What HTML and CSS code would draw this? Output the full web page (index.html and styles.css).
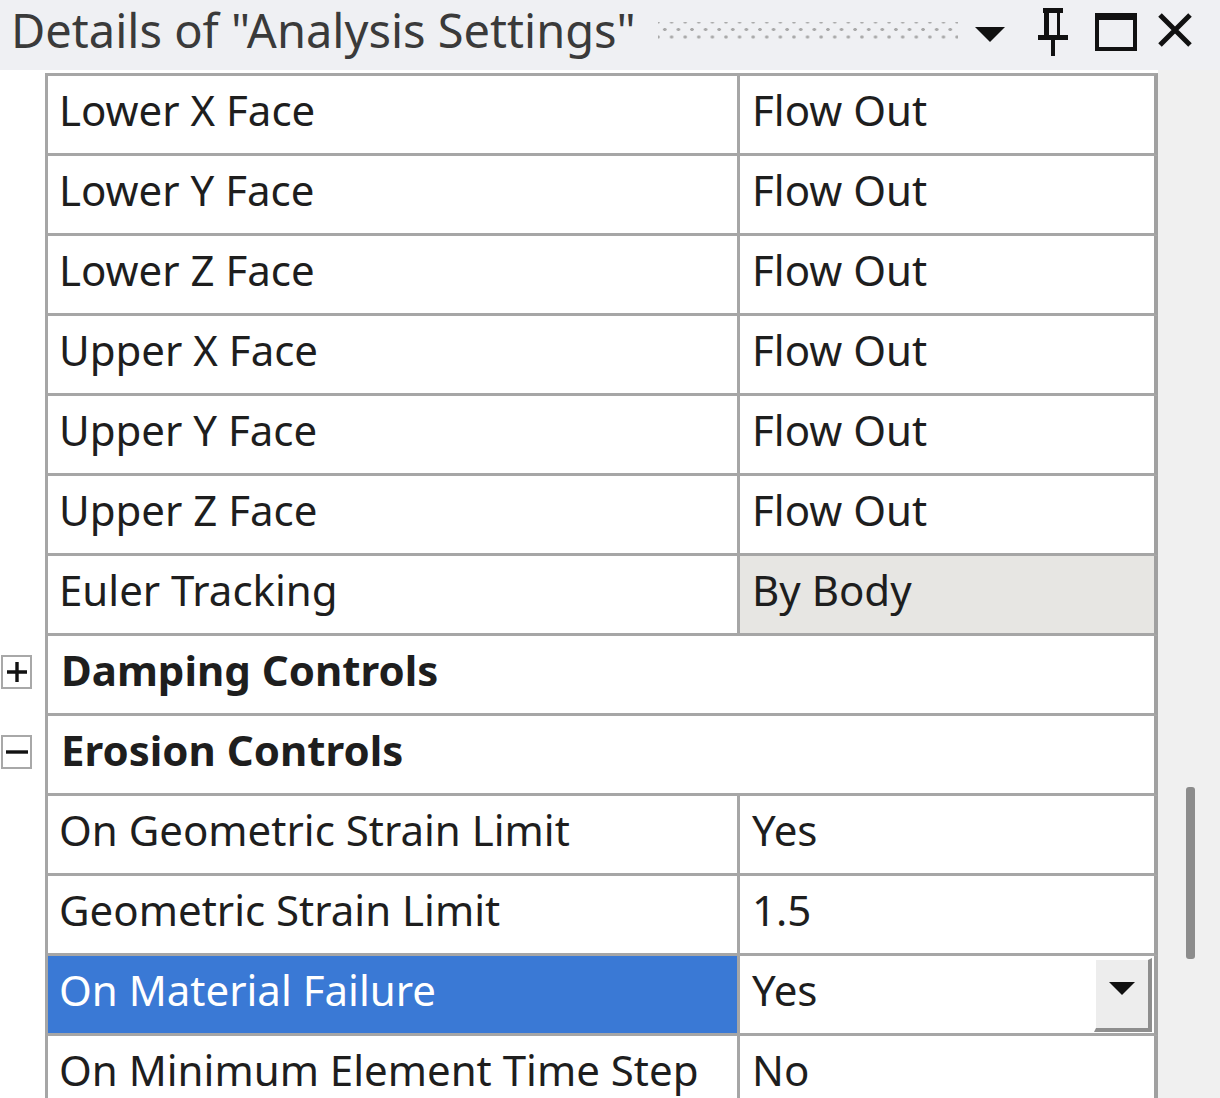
FILE: index.html
```html
<!DOCTYPE html>
<html>
<head>
    <meta charset="UTF-8">
    <title>Details of "Analysis Settings"</title>
    <link rel="stylesheet" href="styles.css">
</head>
<body>
    <div class="titlebar">
        <span class="title">Details of "Analysis Settings"</span>
        <span class="grip"></span>
        <span class="tools">
            <!-- window menu -->
            <svg class="tool menu" width="30" height="16" viewBox="0 0 30 16">
                <polygon points="0,1 30,1 15,16" fill="#111"/>
            </svg>
            <!-- pin -->
            <svg class="tool pin" width="30" height="48" viewBox="0 0 30 48">
                <rect x="5" y="0" width="20" height="5" fill="#111"/>
                <rect x="6" y="3" width="5" height="26" fill="#111"/>
                <rect x="19" y="3" width="3" height="26" fill="#111"/>
                <rect x="0" y="27" width="30" height="5" fill="#111"/>
                <rect x="13" y="31" width="4" height="17" fill="#111"/>
            </svg>
            <!-- maximize -->
            <svg class="tool max" width="42" height="38" viewBox="0 0 42 38">
                <rect x="2" y="2" width="38" height="34" fill="none" stroke="#111" stroke-width="4"/>
                <rect x="0" y="0" width="42" height="7" fill="#111"/>
            </svg>
            <!-- close -->
            <svg class="tool close" width="34" height="34" viewBox="0 0 34 34">
                <path d="M2 2 L32 32 M32 2 L2 32" stroke="#111" stroke-width="5"/>
            </svg>
        </span>
    </div>

    <div class="panel">
        <div class="sheet">
            <div class="row">
                <div class="gutter"></div>
                <div class="cell name">Lower X Face</div>
                <div class="cell value">Flow Out</div>
            </div>
            <div class="row">
                <div class="gutter"></div>
                <div class="cell name">Lower Y Face</div>
                <div class="cell value">Flow Out</div>
            </div>
            <div class="row">
                <div class="gutter"></div>
                <div class="cell name">Lower Z Face</div>
                <div class="cell value">Flow Out</div>
            </div>
            <div class="row">
                <div class="gutter"></div>
                <div class="cell name">Upper X Face</div>
                <div class="cell value">Flow Out</div>
            </div>
            <div class="row">
                <div class="gutter"></div>
                <div class="cell name">Upper Y Face</div>
                <div class="cell value">Flow Out</div>
            </div>
            <div class="row">
                <div class="gutter"></div>
                <div class="cell name">Upper Z Face</div>
                <div class="cell value">Flow Out</div>
            </div>
            <div class="row">
                <div class="gutter"></div>
                <div class="cell name">Euler Tracking</div>
                <div class="cell value readonly">By Body</div>
            </div>
            <div class="row">
                <div class="gutter">
                    <span class="expander">
                        <svg width="22" height="22" viewBox="0 0 22 22">
                            <path d="M1 11 H21 M11 1 V21" stroke="#111" stroke-width="3.4"/>
                        </svg>
                    </span>
                </div>
                <div class="cell group">Damping Controls</div>
            </div>
            <div class="row">
                <div class="gutter">
                    <span class="expander">
                        <svg width="22" height="22" viewBox="0 0 22 22">
                            <path d="M0 11 H22" stroke="#111" stroke-width="3.4"/>
                        </svg>
                    </span>
                </div>
                <div class="cell group">Erosion Controls</div>
            </div>
            <div class="row">
                <div class="gutter"></div>
                <div class="cell name">On Geometric Strain Limit</div>
                <div class="cell value">Yes</div>
            </div>
            <div class="row">
                <div class="gutter"></div>
                <div class="cell name">Geometric Strain Limit</div>
                <div class="cell value">1.5</div>
            </div>
            <div class="row">
                <div class="gutter"></div>
                <div class="cell name selected">On Material Failure</div>
                <div class="cell value combo">
                    <span>Yes</span>
                    <span class="combo-btn">
                        <svg width="28" height="16" viewBox="0 0 28 16">
                            <polygon points="1,2 27,2 14,15" fill="#111"/>
                        </svg>
                    </span>
                </div>
            </div>
            <div class="row">
                <div class="gutter"></div>
                <div class="cell name">On Minimum Element Time Step</div>
                <div class="cell value">No</div>
            </div>
        </div>
        <div class="rail">
            <div class="thumb"></div>
        </div>
    </div>
</body>
</html>
```

FILE: styles.css
```css
body {
    margin: 0;
    background: #ffffff;
    font-family: "Noto Sans", "Open Sans", sans-serif;
    color: #1e1e1e;
    overflow: hidden;
}

/* header strip */
.titlebar {
    height: 70px;
    background: #eff0f3;
    display: flex;
    align-items: center;
    padding-left: 11px;
}

.title {
    font-size: 47px;
    color: #3a3a3a;
    white-space: nowrap;
    margin-top: -10px;
}

.grip {
    width: 300px;
    height: 18px;
    margin-left: 22px;
    margin-top: -8px;
    background-image:
        radial-gradient(circle, #a9a9a9 1.5px, transparent 1.9px),
        radial-gradient(circle, #a9a9a9 1.5px, transparent 1.9px);
    background-size: 13.6px 15px;
    background-position: 0 0, 6.8px 7.5px;
}

.tools {
    display: flex;
    align-items: center;
    margin-top: -6px;
}

.tool {
    display: block;
}

.menu {
    margin-left: 17px;
    margin-top: 4px;
}

.pin {
    margin-left: 33px;
}

.max {
    margin-left: 27px;
}

.close {
    margin-left: 21px;
    margin-top: -4px;
}

/* property grid */
.panel {
    display: flex;
    height: 1028px;
}

.sheet {
    width: 1158px;
    padding-top: 3px;
    background: #ffffff;
}

.row {
    display: grid;
    grid-template-columns: 45px 692px 421px;
    height: 80px;
}

.row:first-child {
    height: 83px;
}

.row:first-child .cell {
    border-top: 3px solid #a6a6a6;
}

.gutter {
    display: flex;
    align-items: center;
}

.expander {
    width: 31px;
    height: 34px;
    margin-left: 1px;
    margin-top: -8px;
    border: 2px solid #a8a8a8;
    background: #ffffff;
    display: flex;
    align-items: center;
    justify-content: center;
    box-sizing: border-box;
}

.expander svg {
    display: block;
}

.cell {
    display: flex;
    align-items: center;
    border-left: 3px solid #a6a6a6;
    border-bottom: 3px solid #a6a6a6;
    padding-bottom: 10px;
    font-size: 42px;
    white-space: nowrap;
    overflow: hidden;
}

.name {
    padding-left: 11px;
}

.value {
    padding-left: 12px;
    border-right: 4px solid #a0a0a0;
}

.readonly {
    background: #e7e6e3;
}

.group {
    grid-column: 2 / 4;
    padding-left: 13px;
    font-weight: 700;
    font-size: 42px;
    border-right: 4px solid #a0a0a0;
}

.selected {
    background: #3a79d5;
    color: #ffffff;
}

.combo {
    padding-bottom: 0;
}

.combo span:first-child {
    margin-bottom: 10px;
}

.combo-btn {
    margin-left: auto;
    margin-right: 2px;
    width: 58px;
    height: 74px;
    background: #ededed;
    border-top: 2px solid #ffffff;
    border-left: 2px solid #ffffff;
    border-right: 4px solid #8e8e8e;
    border-bottom: 4px solid #8e8e8e;
    display: flex;
    align-items: center;
    justify-content: center;
    box-sizing: border-box;
    padding-bottom: 12px;
}

/* vertical scroll rail */
.rail {
    flex: 1;
    background: #f0f0f0;
    position: relative;
}

.thumb {
    position: absolute;
    left: 28px;
    top: 717px;
    width: 9px;
    height: 172px;
    border-radius: 3px;
    background: #8c8c8c;
}
```
